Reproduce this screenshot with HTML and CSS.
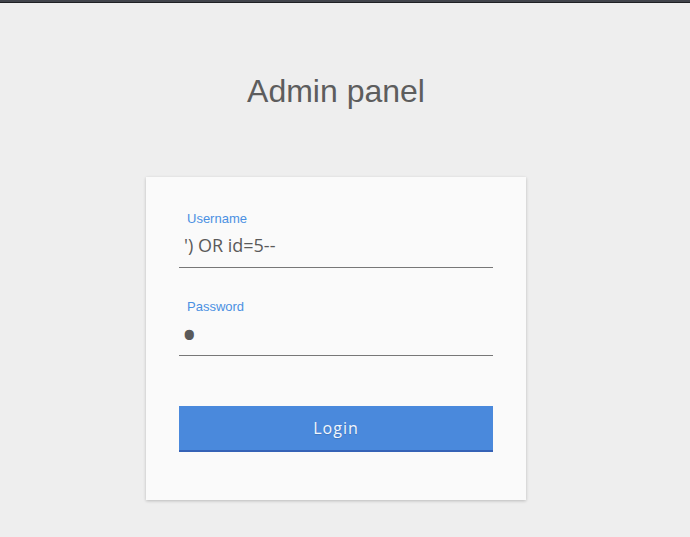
FILE: index.html
```html
<!DOCTYPE html>
<html>
<head>
<meta charset="utf-8">
<title>Admin panel</title>
<link rel="stylesheet" href="styles.css">
</head>
<body>
<div class="topbar"></div>
<main class="page">
  <h1 class="title">Admin panel</h1>
  <form class="card">
    <div class="field">
      <label class="label" for="user">Username</label>
      <input class="input" id="user" type="text" value="') OR id=5--">
    </div>
    <div class="field">
      <label class="label" for="pass">Password</label>
      <input class="input input-pass" id="pass" type="password" value="x">
    </div>
    <button class="btn" type="button">Login</button>
  </form>
</main>
</body>
</html>
```
FILE: styles.css
```css
html, body {
  margin: 0;
  padding: 0;
}
body {
  background: #eeeeee;
  font-family: "Liberation Sans", Arial, sans-serif;
  min-height: 537px;
}
.topbar {
  height: 2px;
  background: #41444b;
  border-bottom: 1px solid #1e2024;
}
.page {
  width: 672px;
  display: flex;
  flex-direction: column;
  align-items: center;
}
.title {
  margin: 70px 0 0;
  font-size: 32px;
  line-height: 36px;
  font-weight: normal;
  color: #5d5d5d;
}
.card {
  margin-top: 68px;
  width: 380px;
  box-sizing: border-box;
  padding: 33px 33px 48px;
  background: #fafafa;
  box-shadow: 0 1px 3px rgba(0, 0, 0, 0.22);
  display: flex;
  flex-direction: column;
}
.field {
  display: flex;
  flex-direction: column;
  margin-bottom: 30px;
}
.label {
  display: block;
  padding: 1px 0 0 8px;
  font-size: 13px;
  line-height: 16px;
  color: #4a90e2;
}
.input {
  display: block;
  box-sizing: content-box;
  height: 24px;
  padding: 6px 5px 10px;
  margin: 0;
  border: none;
  border-bottom: 1px solid #777777;
  background: transparent;
  font-family: "Open Sans", sans-serif;
  font-size: 18px;
  line-height: 24px;
  color: #5a5a5a;
  outline: none;
  width: calc(100% - 10px);
}
.input-pass {
  font-size: 44px;
  padding: 7px 5px 9px 2px;
  width: calc(100% - 7px);
}
.btn {
  margin-top: 20px;
  height: 46px;
  padding: 0;
  border: none;
  border-bottom: 2px solid #3562b6;
  background: #4a89dc;
  color: #f2f6fc;
  font-family: "Open Sans", sans-serif;
  font-size: 16px;
  letter-spacing: 1px;
  text-shadow: 0 1px 1px rgba(0, 0, 0, 0.15);
  cursor: pointer;
}
```
